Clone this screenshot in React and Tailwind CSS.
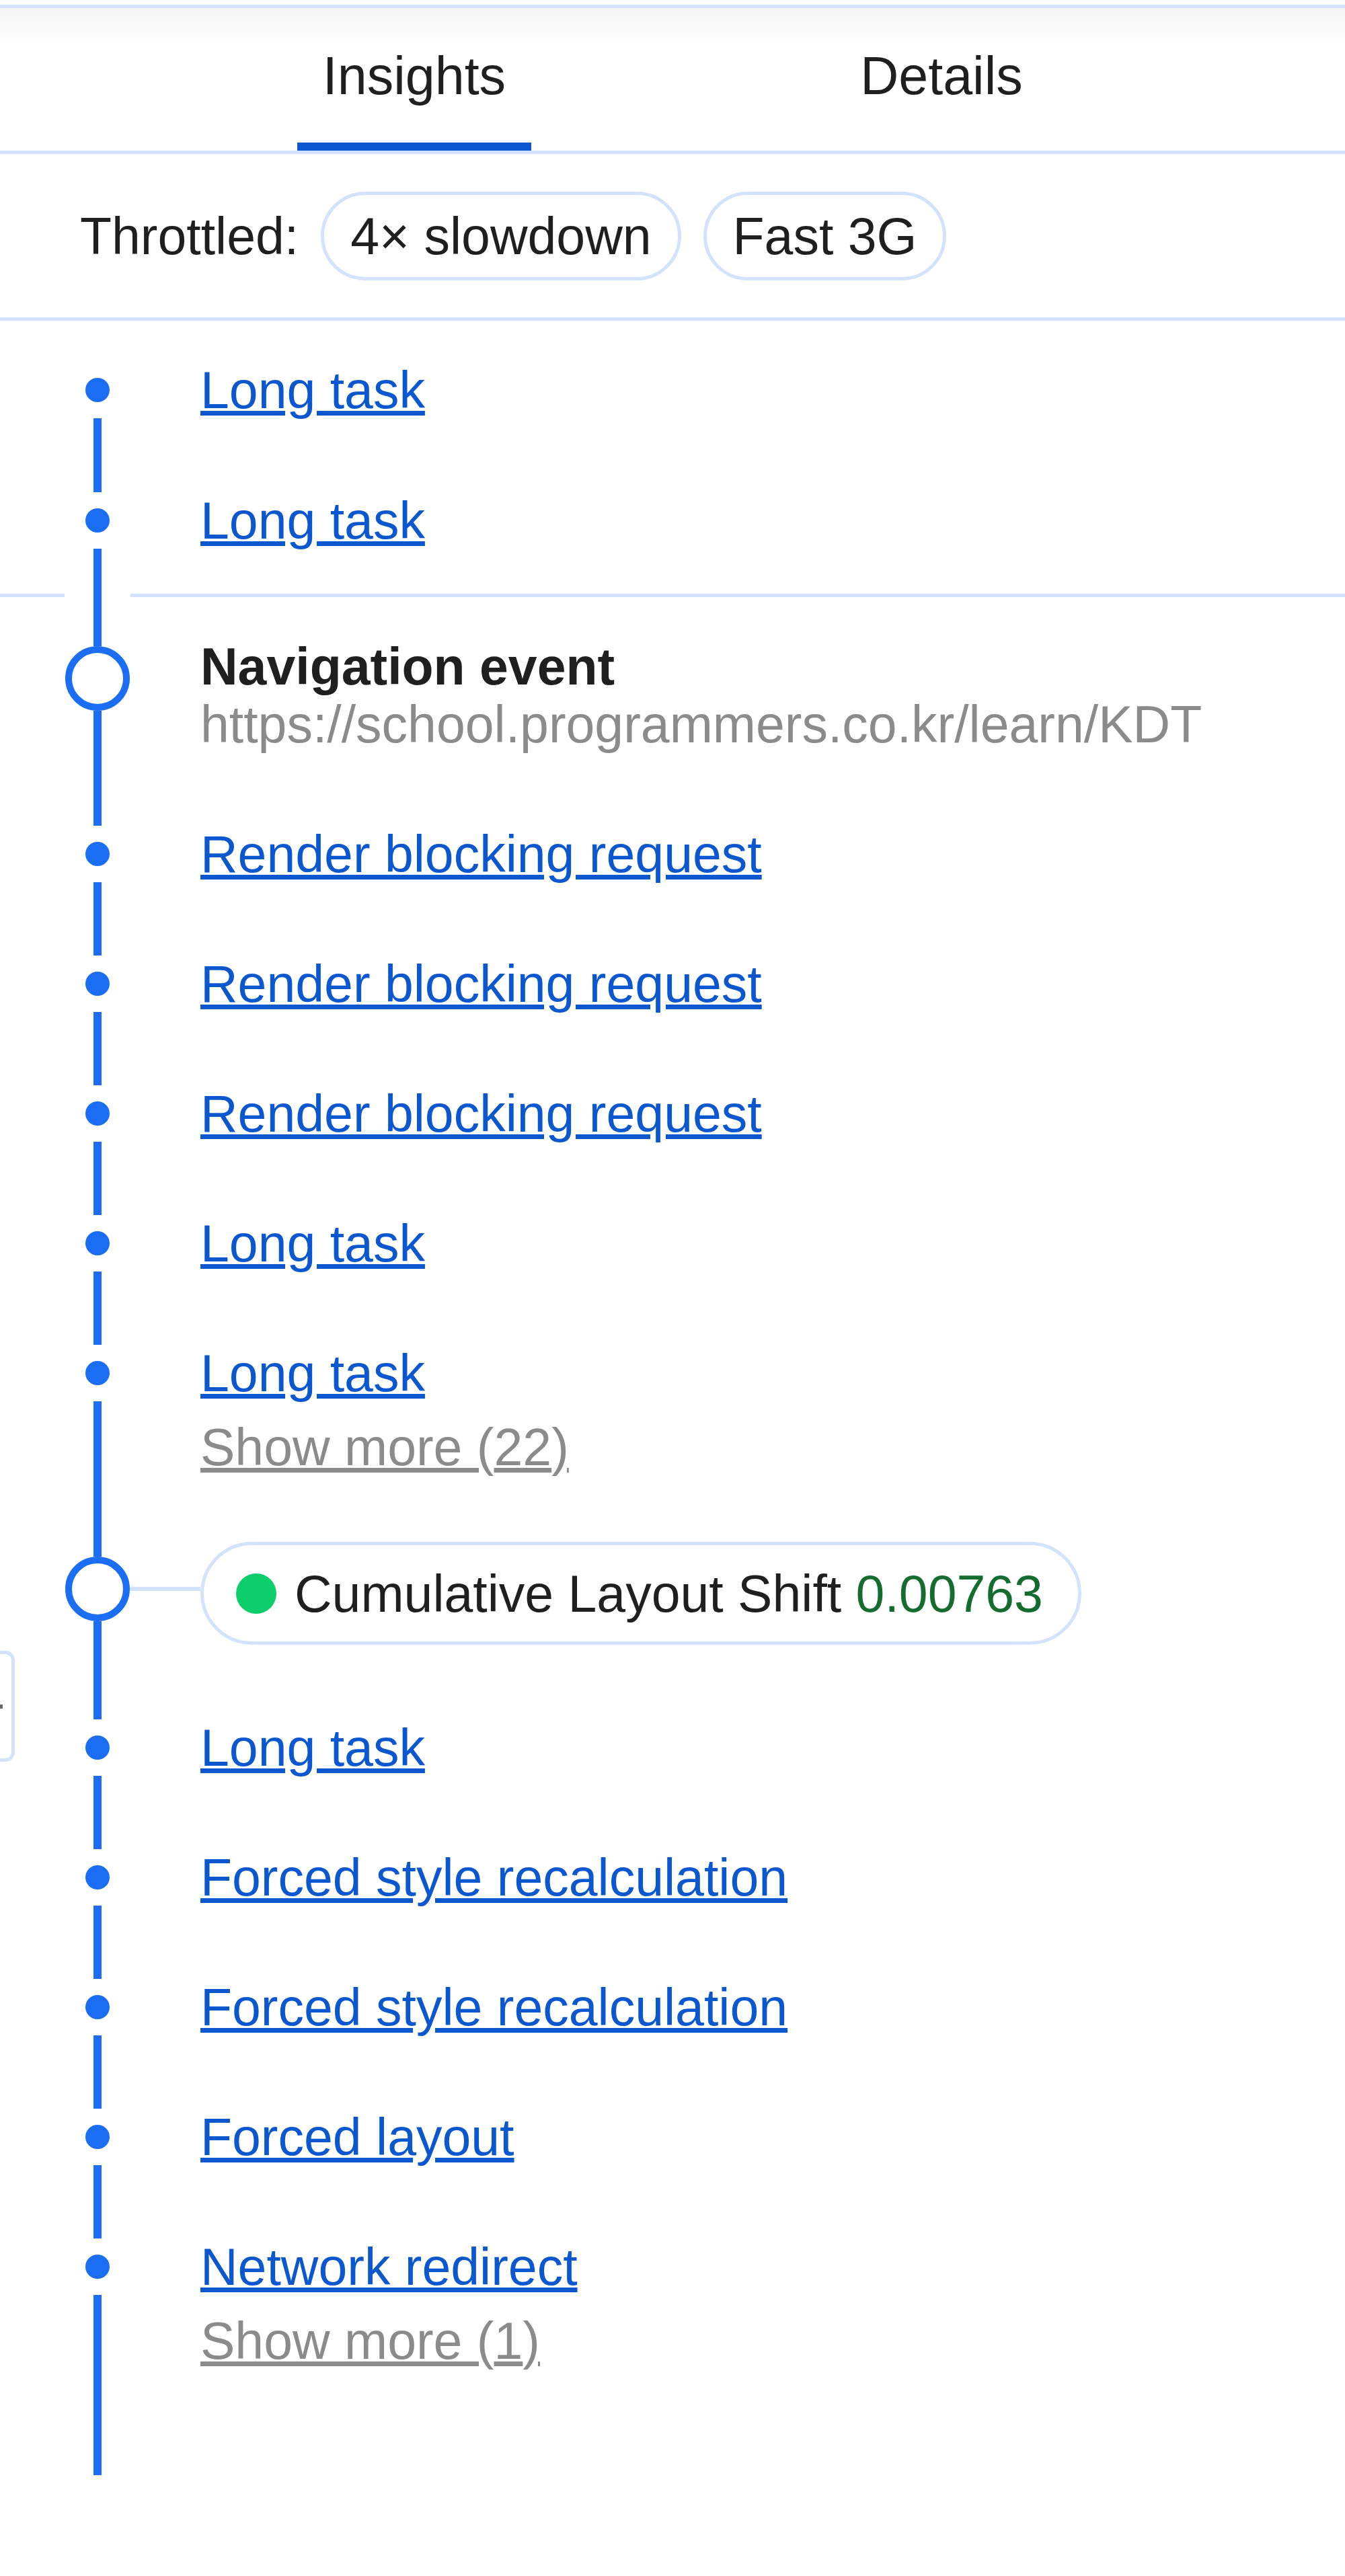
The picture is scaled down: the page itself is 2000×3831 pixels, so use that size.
import React from "react";

const events1 = [
    { label: "Render blocking request" },
    { label: "Render blocking request" },
    { label: "Render blocking request" },
    { label: "Long task" },
];

const events2 = [
    { label: "Long task" },
    { label: "Forced style recalculation" },
    { label: "Forced style recalculation" },
    { label: "Forced layout" },
];

const Dot = () => <div className="w-[36px] h-[36px] my-[24px] shrink-0 rounded-full bg-[#1b6ef3]" />;

const EventRow = ({ label, more, first, top = "h-[54px]", pt = "pt-[51px]", pb = "pb-[52px]" }) => (
    <div className="flex">
        {/* marker column */}
        <div className="w-[290px] shrink-0 flex flex-col items-center">
            <div className={`w-[12px] shrink-0 ${top} ${first ? "" : "bg-[#1b6ef3]"}`} />
            <Dot />
            <div className="w-[12px] flex-1 bg-[#1b6ef3]" />
        </div>
        <div className={`pl-[8px] ${pt} ${pb}`}>
            <a href="#" className="block text-[77px] leading-[90px] text-[#0b57d0] underline whitespace-nowrap">
                {label}
            </a>
            {more && (
                <a href="#" className="block mt-[20px] text-[77px] leading-[90px] text-[#8b8b8b] underline whitespace-nowrap">
                    Show more ({more})
                </a>
            )}
        </div>
    </div>
);

const Tab = ({ label, active }) => (
    <div className="w-[784px] flex justify-center">
        <div className="h-full flex flex-col items-center pt-[57px]">
            <span className="px-[38px] text-[79px] leading-[88px] text-[#1f1f1f] whitespace-nowrap">{label}</span>
            <div className={`mt-auto h-[12px] w-full ${active ? "bg-[#0b57d0]" : ""}`} />
        </div>
    </div>
);

const Chip = ({ children }) => (
    <span className="h-[132px] flex items-center px-[39px] rounded-full border-[5px] border-[#d3e3fd] text-[77px] leading-[86px] text-[#1f1f1f] whitespace-nowrap">
        {children}
    </span>
);

export default function App() {
    return (
        <div className="w-full min-h-[3831px] bg-white overflow-hidden font-['Liberation_Sans',Arial,sans-serif]">
            {/* Tabs */}
            <div className="pt-[7px]">
                <div className="h-[222px] border-t-[5px] border-b-[5px] border-[#d3e3fd] bg-[linear-gradient(to_bottom,#f5f5f5,#ffffff_55px)]">
                    <div className="h-full flex justify-center pl-[16px]">
                        <Tab label="Insights" active />
                        <Tab label="Details" />
                    </div>
                </div>
            </div>

            {/* Throttling */}
            <div className="h-[248px] flex items-center gap-[33px] pl-[119px] border-b-[5px] border-[#d3e3fd]">
                <span className="text-[77px] leading-[86px] text-[#1f1f1f]">Throttled:</span>
                <Chip>4× slowdown</Chip>
                <Chip>Fast 3G</Chip>
            </div>

            {/* Timeline */}
            <div className="relative">
                <EventRow label="Long task" first top="h-[61px]" pt="pt-[58px]" pb="pb-[52px]" />
                <EventRow label="Long task" top="h-[55px]" pt="pt-[52px]" pb="pb-[64px]" />

                {/* separator with gap around the line */}
                <div className="flex h-[5px]">
                    <div className="w-[96px] bg-[#d3e3fd]" />
                    <div className="w-[98px] flex justify-center">
                        <div className="w-[12px] h-full bg-[#1b6ef3]" />
                    </div>
                    <div className="flex-1 bg-[#d3e3fd]" />
                </div>

                {/* Navigation event */}
                <div className="flex h-[286px]">
                    <div className="w-[290px] shrink-0 flex flex-col items-center">
                        <div className="w-[12px] h-[73px] shrink-0 bg-[#1b6ef3]" />
                        <div className="w-[96px] h-[96px] shrink-0 rounded-full border-[10px] border-[#1b6ef3] bg-white" />
                        <div className="w-[12px] flex-1 bg-[#1b6ef3]" />
                    </div>
                    <div className="pl-[8px] pt-[60px]">
                        <div className="text-[77px] leading-[86px] font-bold text-[#1f1f1f] whitespace-nowrap">Navigation event</div>
                        <div className="text-[77px] leading-[86px] text-[#8b8b8b] whitespace-nowrap">
                            https://school.programmers.co.kr/learn/KDT
                        </div>
                    </div>
                </div>

                {events1.map((e, i) => (
                    <EventRow key={i} label={e.label} />
                ))}
                <EventRow label="Long task" more="22" pb="pb-0" />

                {/* Cumulative Layout Shift */}
                <div className="flex h-[306px]">
                    <div className="w-[290px] shrink-0 flex flex-col items-center">
                        <div className="w-[12px] h-[118px] shrink-0 bg-[#1b6ef3]" />
                        <div className="relative w-[96px] h-[96px] shrink-0 rounded-full border-[10px] border-[#1b6ef3] bg-white">
                            <div className="absolute left-[86px] top-1/2 -translate-y-1/2 w-[105px] h-[6px] bg-[#d3e3fd]" />
                        </div>
                        <div className="w-[12px] flex-1 bg-[#1b6ef3]" />
                    </div>
                    <div className="pl-[8px]">
                        <div className="mt-[96px] h-[153px] flex items-center pl-[48px] pr-[52px] rounded-full border-[5px] border-[#d3e3fd] bg-white">
                            <span className="w-[60px] h-[60px] shrink-0 rounded-full bg-[#0cce6b]" />
                            <span className="ml-[27px] text-[77px] leading-[86px] text-[#1f1f1f] whitespace-nowrap">
                                Cumulative Layout Shift <span className="text-[#146c2e]">0.00763</span>
                            </span>
                        </div>
                    </div>
                </div>

                {events2.map((e, i) => (
                    <EventRow key={i} label={e.label} />
                ))}
                <EventRow label="Network redirect" more="1" pb="pb-[155px]" />

                {/* clipped panel edge on the left */}
                <div className="absolute left-[-40px] top-[1978px] w-[62px] h-[165px] rounded-[14px] border-[5px] border-[#d3e3fd] bg-white">
                    <div className="absolute left-[35px] top-[75px] w-[4px] h-[6px] bg-[#666666]" />
                </div>
            </div>
        </div>
    );
}
